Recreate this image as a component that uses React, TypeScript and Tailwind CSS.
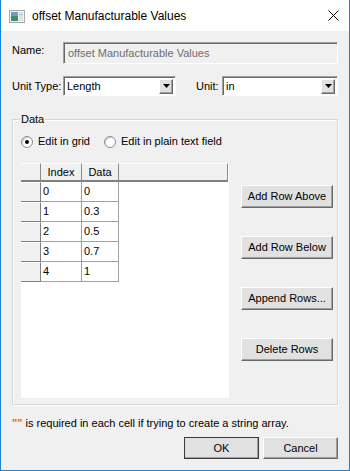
import React from 'react';

const raised =
  'flex items-center justify-center bg-[#e1e1e1] border border-t-white border-l-white border-r-[#696969] border-b-[#696969] shadow-[inset_-1px_-1px_0_#a0a0a0]';
const sunken =
  'border border-t-[#a0a0a0] border-l-[#a0a0a0] border-r-white border-b-white shadow-[inset_1px_1px_0_#696969]';

const Button = ({ label, className = '' }: { label: string; className?: string }) => (
  <div className={`${raised} ${className}`}>{label}</div>
);

const Combo = ({ value, className = '' }: { value: string; className?: string }) => (
  <div className={`${sunken} bg-white flex items-center h-[20px] pl-[3px] pr-[2px] ${className}`}>
    <span className="flex-1 leading-none">{value}</span>
    <div className={`${raised} w-[14px] h-[15px]`}>
      <svg width="7" height="4" viewBox="0 0 7 4">
        <path d="M0 0h7L3.5 4z" fill="#000" />
      </svg>
    </div>
  </div>
);

const Radio = ({ checked, label }: { checked?: boolean; label: string }) => (
  <div className="flex items-center gap-[5px]">
    <div className="w-[12px] h-[12px] rounded-full border border-[#8a8a8a] bg-white flex items-center justify-center shadow-[inset_1px_1px_0_#d0d0d0]">
      {checked && <div className="w-[4px] h-[4px] rounded-full bg-black" />}
    </div>
    <span>{label}</span>
  </div>
);

const rows = [
  ['0', '0'],
  ['1', '0.3'],
  ['2', '0.5'],
  ['3', '0.7'],
  ['4', '1'],
];

const headCell = 'bg-[#f0f0f0] border-t border-t-white border-r border-r-[#8c8c8c] border-b-2 border-b-[#808080] flex items-center';

export default function App() {
  return (
    <div
      className="w-[350px] h-[471px] bg-[#f0f0f0] border-x border-b border-[#1883d7] flex flex-col text-[11px] text-black"
      style={{ fontFamily: '"Liberation Sans", Arial, sans-serif' }}
    >
      {/* title bar */}
      <div className="h-[31px] bg-white flex items-center pl-[8px] pr-[10px] shrink-0">
        <svg width="16" height="13" viewBox="0 0 16 13" className="mt-[1px]">
          <rect x="0.5" y="0.5" width="15" height="12" fill="#f4f4f4" stroke="#a8a8a8" />
          <rect x="2" y="2" width="7" height="9" fill="#3c8a78" />
          <rect x="2" y="2" width="7" height="4" fill="#6a9fc0" />
          <rect x="10" y="2" width="4" height="9" fill="#e2e2e2" />
          <rect x="10" y="4" width="4" height="1" fill="#9cc4dc" />
        </svg>
        <span className="ml-[7px] text-[12px] flex-1">offset Manufacturable Values</span>
        <svg width="11" height="11" viewBox="0 0 11 11">
          <path d="M0.5 0.5l10 10M10.5 0.5l-10 10" stroke="#000" strokeWidth="1" />
        </svg>
      </div>

      <div className="flex flex-col pl-[11px] pr-[11px]">
        {/* name */}
        <div className="flex items-center mt-[11px] h-[22px]">
          <span className="w-[51px] -mt-[6px]">Name:</span>
          <div className={`${sunken} bg-[#f0f0f0] w-[275px] h-[22px] flex items-center pl-[4px] text-[#6d6d6d]`}>
            offset Manufacturable Values
          </div>
        </div>

        {/* unit row */}
        <div className="flex items-center mt-[12px] h-[20px]">
          <span className="w-[51px]">Unit Type:</span>
          <Combo value="Length" className="w-[113px]" />
          <span className="ml-[20px] w-[26px]">Unit:</span>
          <Combo value="in" className="w-[116px]" />
        </div>

        {/* data group */}
        <div className="relative mt-[23px] h-[286px] border border-[#d5d5d5] shadow-[inset_1px_1px_0_white,1px_1px_0_white] flex flex-col pl-[8px]">
          <span className="absolute -top-[7px] left-[7px] px-[1px] bg-[#f0f0f0] leading-[13px]">Data</span>
          <div className="flex items-center gap-[9px] mt-[15px] h-[13px]">
            <Radio checked label="Edit in grid" />
            <div className="ml-[5px]">
              <Radio label="Edit in plain text field" />
            </div>
          </div>
          <div className="flex mt-[15px]">
            {/* grid */}
            <div className="w-[208px] h-[235px] bg-white flex flex-col">
              <div className="flex h-[19px]">
                <div className={`${headCell} w-[20px]`} />
                <div className={`${headCell} w-[41px] justify-center`}>Index</div>
                <div className={`${headCell} w-[37px] justify-center`}>Data</div>
                <div className={`${headCell} w-[109px]`} />
              </div>
              {rows.map(([i, d]) => (
                <div key={i} className="flex h-[20px]">
                  <div className="w-[20px] bg-[#f0f0f0] border-t border-t-white border-r border-r-[#808080] border-b border-b-[#808080]" />
                  <div className="w-[41px] border-r border-b border-[#a0a0a0] pl-[2px] flex items-center">{i}</div>
                  <div className="w-[37px] border-r border-b border-[#a0a0a0] pl-[2px] flex items-center">{d}</div>
                </div>
              ))}
            </div>

            {/* buttons */}
            <div className="flex flex-col ml-[12px] mt-[22px] gap-[28px]">
              <Button label="Add Row Above" className="w-[92px] h-[23px]" />
              <Button label="Add Row Below" className="w-[92px] h-[23px]" />
              <Button label="Append Rows..." className="w-[92px] h-[23px]" />
              <Button label="Delete Rows" className="w-[92px] h-[23px]" />
            </div>
          </div>
        </div>

        {/* footer note */}
        <div className="mt-[12px] h-[13px] leading-[13px]">
          <span className="text-[#d07000] font-bold">""</span> is required in each cell if trying to create a string array.
        </div>

        {/* dialog buttons */}
        <div className="flex justify-end gap-[4px] mt-[7px]">
          <Button label="OK" className="w-[75px] h-[22px] outline outline-1 outline-[#3c3c3c] -outline-offset-1" />
          <Button label="Cancel" className="w-[75px] h-[22px]" />
        </div>
      </div>
    </div>
  );
}
